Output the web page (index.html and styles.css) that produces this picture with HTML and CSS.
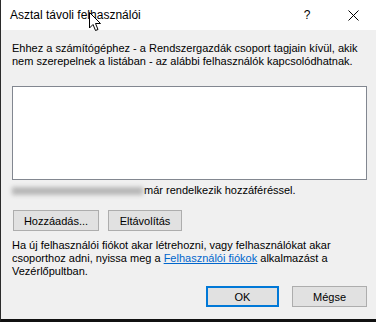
FILE: index.html
```html
<html lang="hu">

<head>
    <meta charset="UTF-8">
    <meta name="viewport" content="width=device-width, initial-scale=1.0">
    <title>Asztal távoli felhasználói</title>
    <link rel="stylesheet" href="styles.css">
</head>

<body>
    <div class="dialog">
        <div class="titlebar">
            <span class="title">Asztal távoli felhasználói</span>
            <span class="help">?</span>
            <span class="close">
                <svg width="11" height="11" viewBox="0 0 11 11">
                    <path d="M0.5 0.5 L10.5 10.5 M10.5 0.5 L0.5 10.5" stroke="#000" stroke-width="1" fill="none" />
                </svg>
            </span>
            <!-- egérmutató -->
            <svg class="cursor" width="13" height="20" viewBox="0 0 13 20">
                <path d="M0.5 0.5 L0.5 16 L4 12.5 L6.5 18.5 L9 17.5 L6.5 11.5 L11.5 11.5 Z" fill="#fff" stroke="#000" stroke-width="1" />
            </svg>
        </div>
        <div class="content">
            <p class="intro">Ehhez a számítógéphez - a Rendszergazdák csoport tagjain kívül, akik nem szerepelnek a listában - az alábbi felhasználók kapcsolódhatnak.</p>
            <div class="listbox"></div>
            <p class="access"><span class="blurred"></span>már rendelkezik hozzáféréssel.</p>
            <div class="actions">
                <button class="btn btn-add">Hozzáadás...</button>
                <button class="btn btn-remove">Eltávolítás</button>
            </div>
            <p class="note">Ha új felhasználói fiókot akar létrehozni, vagy felhasználókat akar csoporthoz adni, nyissa meg a <a href="#">Felhasználói fiókok</a> alkalmazást a Vezérlőpultban.</p>
            <div class="footer">
                <button class="btn btn-ok">OK</button>
                <button class="btn btn-cancel">Mégse</button>
            </div>
        </div>
    </div>
</body>

</html>
```

FILE: styles.css
```css
body {
    margin: 0;
    font-family: "Liberation Sans", Arial, sans-serif;
    font-size: 11px;
    color: #000;
}

.dialog {
    width: 376px;
    height: 322px;
    box-sizing: border-box;
    background-color: #f0f0f0;
    border-left: 1px solid #2b2b2b;
    border-bottom: 3px solid #111;
}

.titlebar {
    position: relative;
    height: 30px;
    background-color: #fff;
    display: flex;
    align-items: center;
    padding-left: 9px;
}

.title {
    font-size: 12px;
    flex: 1;
}

.help {
    font-size: 12px;
    width: 46px;
    text-align: center;
}

.close {
    width: 46px;
    display: flex;
    justify-content: center;
}

.cursor {
    position: absolute;
    left: 88px;
    top: 12px;
}

.content {
    padding: 12px 9px 0 11px;
}

p {
    margin: 0;
    line-height: 13px;
}

.listbox {
    margin-top: 18px;
    height: 92px;
    background-color: #fff;
    border: 1px solid #828790;
}

.access {
    margin-top: 4px;
    display: flex;
    align-items: center;
}

.blurred {
    display: inline-block;
    width: 131px;
    height: 8px;
    margin-right: 1px;
    background-color: #b8b8b8;
    filter: blur(2px);
}

.actions {
    margin-top: 13px;
    display: flex;
    gap: 9px;
    padding-left: 1px;
}

.btn {
    font-family: "Liberation Sans", Arial, sans-serif;
    font-size: 11px;
    height: 21px;
    padding: 0;
    background-color: #e1e1e1;
    border: 1px solid #adadad;
    color: #000;
}

.btn-add {
    width: 86px;
}

.btn-remove {
    width: 74px;
}

.note {
    margin-top: 8px;
}

.note a {
    color: #0066cc;
}

.footer {
    margin-top: 8px;
    display: flex;
    justify-content: flex-end;
    gap: 13px;
}

.btn-ok {
    width: 73px;
    border: 2px solid #0078d7;
}

.btn-cancel {
    width: 75px;
}
```
